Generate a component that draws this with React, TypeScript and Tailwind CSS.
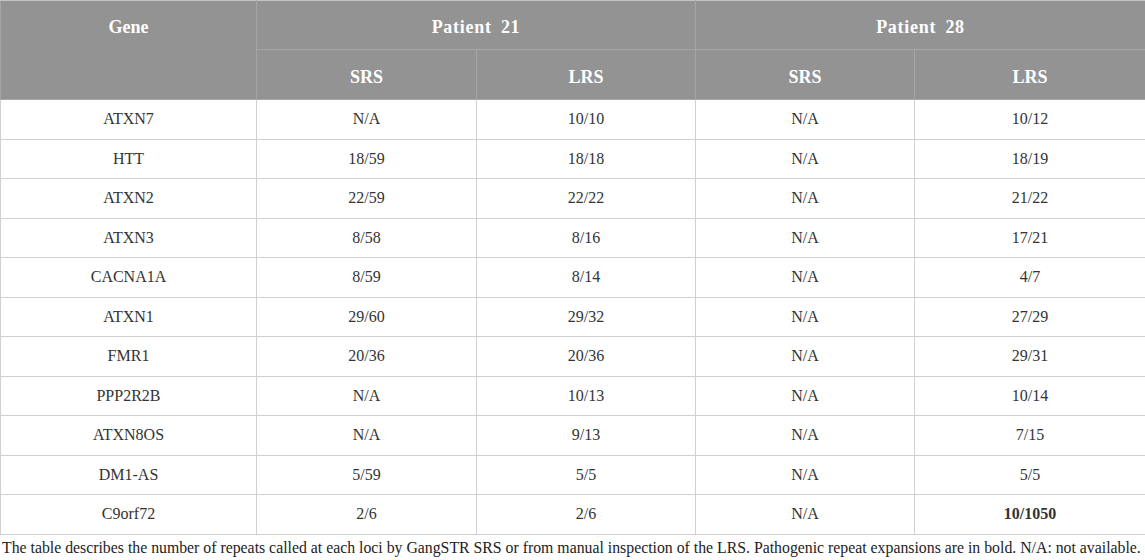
const rows = [
  { gene: "ATXN7", p21srs: "N/A", p21lrs: "10/10", p28srs: "N/A", p28lrs: "10/12" },
  { gene: "HTT", p21srs: "18/59", p21lrs: "18/18", p28srs: "N/A", p28lrs: "18/19" },
  { gene: "ATXN2", p21srs: "22/59", p21lrs: "22/22", p28srs: "N/A", p28lrs: "21/22" },
  { gene: "ATXN3", p21srs: "8/58", p21lrs: "8/16", p28srs: "N/A", p28lrs: "17/21" },
  { gene: "CACNA1A", p21srs: "8/59", p21lrs: "8/14", p28srs: "N/A", p28lrs: "4/7" },
  { gene: "ATXN1", p21srs: "29/60", p21lrs: "29/32", p28srs: "N/A", p28lrs: "27/29" },
  { gene: "FMR1", p21srs: "20/36", p21lrs: "20/36", p28srs: "N/A", p28lrs: "29/31" },
  { gene: "PPP2R2B", p21srs: "N/A", p21lrs: "10/13", p28srs: "N/A", p28lrs: "10/14" },
  { gene: "ATXN8OS", p21srs: "N/A", p21lrs: "9/13", p28srs: "N/A", p28lrs: "7/15" },
  { gene: "DM1-AS", p21srs: "5/59", p21lrs: "5/5", p28srs: "N/A", p28lrs: "5/5" },
  { gene: "C9orf72", p21srs: "2/6", p21lrs: "2/6", p28srs: "N/A", p28lrs: "10/1050", bold: true },
];

const App = () => {
  return (
    <div className="w-[1145px] h-[560px] bg-white overflow-hidden font-[family-name:'Liberation_Serif',serif] text-[#333333]">
      <table className="w-full border-collapse table-fixed text-[16px]">
        <colgroup>
          <col className="w-[256px]" />
          <col className="w-[220px]" />
          <col className="w-[219px]" />
          <col className="w-[219px]" />
          <col className="w-[231px]" />
        </colgroup>
        <thead className="bg-[#939393] text-white font-bold text-[18px]">
          {/* Top header row */}
          <tr className="h-[49px]">
            <th rowSpan={2} className="align-top pt-[13px] border border-[#a6a6a6] border-t-[#c4c4c4] font-bold">
              Gene
            </th>
            <th colSpan={2} className="pt-[4px] border border-[#a6a6a6] border-t-[#c4c4c4] tracking-[0.04em] [word-spacing:4px] font-bold">
              Patient 21
            </th>
            <th colSpan={2} className="pt-[4px] border border-[#a6a6a6] border-t-[#c4c4c4] tracking-[0.04em] [word-spacing:4px] font-bold">
              Patient 28
            </th>
          </tr>
          <tr className="h-[50px]">
            <th className="pt-[6px] border border-[#a6a6a6] font-bold">SRS</th>
            <th className="pt-[6px] border border-[#a6a6a6] font-bold">LRS</th>
            <th className="pt-[6px] border border-[#a6a6a6] font-bold">SRS</th>
            <th className="pt-[6px] border border-[#a6a6a6] font-bold">LRS</th>
          </tr>
        </thead>
        <tbody>
          {rows.map((r) => (
            <tr key={r.gene} className="h-[39.5px] text-center">
              <td className="border border-[#d0d0d0]">{r.gene}</td>
              <td className="border border-[#d0d0d0]">{r.p21srs}</td>
              <td className="border border-[#d0d0d0]">{r.p21lrs}</td>
              <td className="border border-[#d0d0d0]">{r.p28srs}</td>
              <td className={`border border-[#d0d0d0] ${r.bold ? "font-bold" : ""}`}>{r.p28lrs}</td>
            </tr>
          ))}
        </tbody>
      </table>
      <p className="pl-[2px] pt-[1px] text-[15.8px] leading-[24px] text-[#222222] whitespace-nowrap">
        The table describes the number of repeats called at each loci by GangSTR SRS or from manual inspection of the LRS. Pathogenic repeat expansions are in bold. N/A: not available.
      </p>
    </div>
  );
};

export default App;
